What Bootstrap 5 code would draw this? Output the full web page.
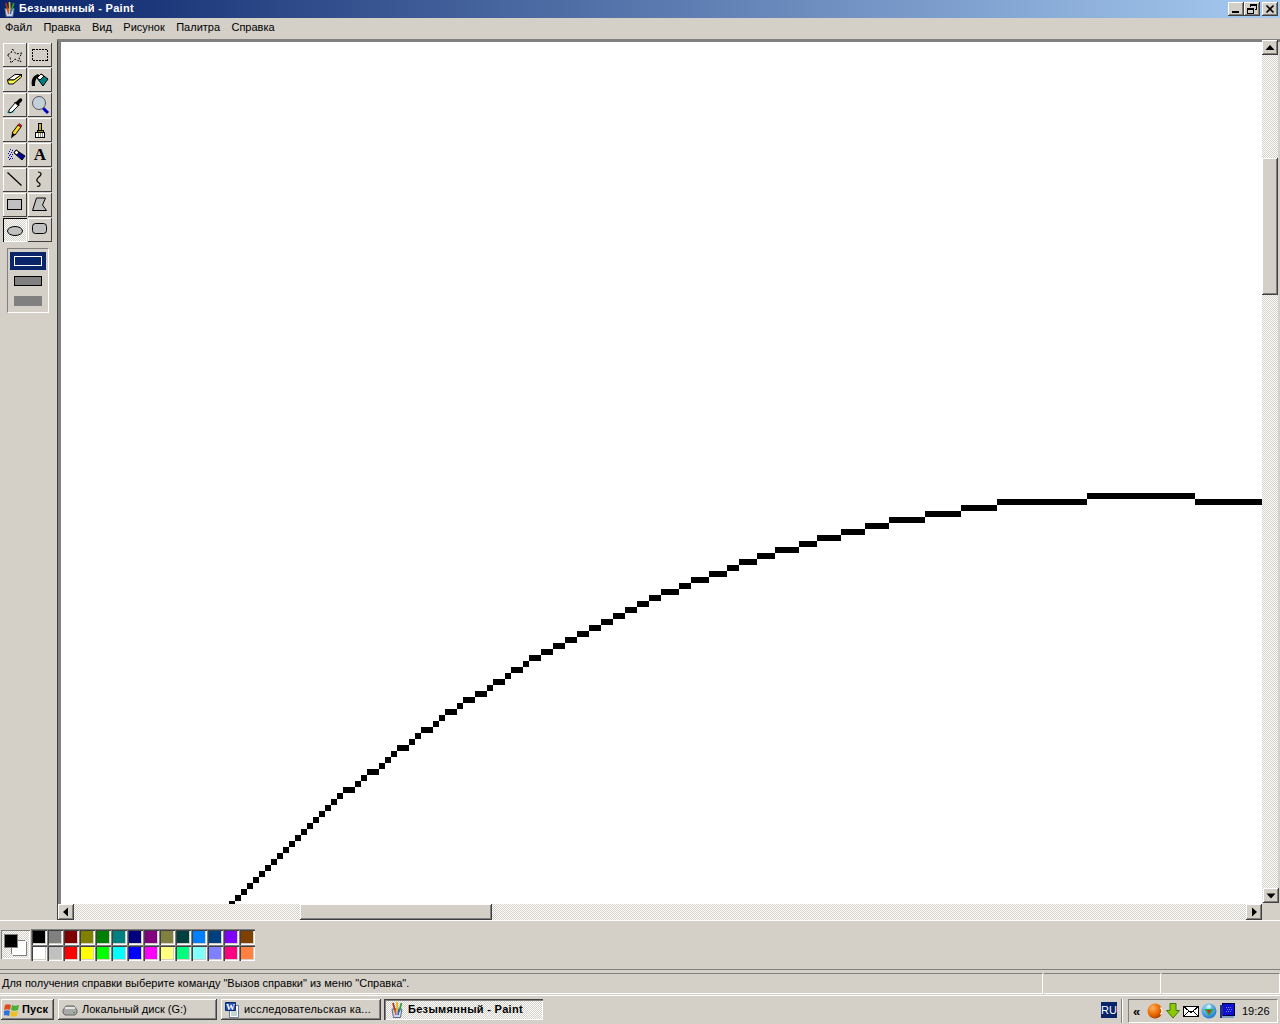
<!DOCTYPE html>
<html lang="ru">
<head>
    <meta charset="UTF-8">
    <title>Безымянный - Paint</title>
    <link href="https://cdn.jsdelivr.net/npm/bootstrap@5.3.3/dist/css/bootstrap.min.css" rel="stylesheet">
    <style>
        body { margin: 0; width: 1280px; height: 1024px; overflow: hidden; background: #d4d0c8; color: #000;
               font: 11px/13px "Liberation Sans", sans-serif; }
        svg { display: block; flex: none; }

        .raised { background: #d4d0c8; box-shadow: inset -1px -1px #404040, inset 1px 1px #fff, inset -2px -2px #808080, inset 2px 2px #d4d0c8; }
        .dither { background: repeating-conic-gradient(#fff 0 25%, #d4d0c8 0 50%) 0 0 / 2px 2px; }

        /* titlebar */
        .title-bar { height: 18px; padding: 2px 2px 0 3px; background: linear-gradient(90deg, #0a246a, #a6caf0); color: #fff; font-weight: 700; }
        .title-text { margin-left: 3px; letter-spacing: .3px; }
        .cap-btn { width: 16px; height: 14px; }
        .cap-gap { margin-left: 2px; }
        .menu-bar { height: 21px; padding: 3px 0 0 5px; gap: 11.4px; }

        /* work area */
        .work-row { height: 881px; }
        .tool-side { width: 57px; padding: 4px 0 0 3px; }
        .tool-grid { display: grid; grid-template-columns: 24px 24px; grid-auto-rows: 24px; gap: 1px; }
        .tool-btn { background: #d4d0c8; box-shadow: inset -1px -1px #404040, inset 1px 1px #fff; }
        .tool-btn.on { background: repeating-conic-gradient(#fff 0 25%, #d4d0c8 0 50%) 0 0 / 2px 2px; box-shadow: inset 1px 1px #000, inset -1px -1px #fff; }
        .tool-letter { font: 700 17px/24px "Liberation Serif", serif; text-align: center; }
        .tool-opts { width: 42px; height: 65px; margin: 6px 0 0 4px; padding: 3px 2px; border: 1px solid #808080; border-right-color: #fff; border-bottom-color: #fff; }
        .opt-item { height: 18px; padding: 4px; margin-bottom: 2px; }
        .opt-item.on { background: #0a246a; }
        .opt-shape { height: 10px; background: #808080; }
        .opt-item.on .opt-shape { background: #0a246a; border: 1px solid #fff; }
        .opt-shape.lined { border: 1px solid #000; }

        .work-space { width: 1223px; height: 881px; border-top: 3px solid #808080; border-left: 1px solid #404040; }
        .work-inner { border-left: 3px solid #808080; }
        .canvas-box { width: 1201px; height: 862px; background: #fff; overflow: hidden; }
        .v-scroll { width: 16px; height: 863px; margin-top: -2px; }
        .h-scroll { height: 16px; margin-right: 18px; }
        .sc-btn { width: 16px; height: 16px; }
        .sc-down { margin-left: 1px; height: 15px; }
        .sc-up { height: 15px; }
        .v-thumb { width: 16px; height: 137px; margin-top: 103px; }
        .h-thumb { width: 192px; height: 16px; margin-left: 226px; }
        .line-top { height: 1px; background: #fff; }

        /* palette */
        .palette-row { height: 48px; padding: 8px 0 0 1px; }
        .cur-colors { width: 29px; height: 29px; margin: 1px 1px 0 0; box-shadow: inset 1px 1px #808080, inset -1px -1px #fff; }
        .cur-back { left: 11px; top: 11px; width: 14px; height: 14px; background: #fff; box-shadow: inset 1px 1px #fff, 1px 1px #808080, -1px -1px #808080; }
        .cur-front { left: 4px; top: 5px; width: 12px; height: 12px; background: #000; box-shadow: 0 0 0 1px #808080; }
        .pal-grid { display: grid; grid-template-columns: repeat(14, 16px); grid-auto-rows: 16px; }
        .pal-cell { box-shadow: inset 1px 1px #808080, inset 2px 2px #404040, inset -1px -1px #fff, inset -2px -2px #d4d0c8; }

        /* status */
        .status-wrap { height: 26px; border-top: 1px solid #808080; padding-top: 3px; }
        .status-cell { height: 21px; padding: 3px 0 0 2px; border-top: 1px solid #808080; border-bottom: 1px solid #fff; border-right: 1px solid #fff; }
        .status-main { width: 1043px; }
        .status-gap { margin-left: 1px; }
        .status-mid { width: 117px; }

        /* taskbar */
        .task-bar { height: 29px; padding-top: 3px; border-top: 1px solid #fff; }
        .start-btn { width: 53px; height: 21px; margin-left: 1px; padding-left: 3px; font-weight: 700; gap: 3px; letter-spacing: .2px; }
        .task-btn { height: 21px; padding-left: 4px; gap: 4px; white-space: nowrap; overflow: hidden; }
        .task-disk { width: 159px; margin-left: 4px; }
        .task-word { width: 160px; margin-left: 4px; letter-spacing: .2px; gap: 3px; }
        .task-paint { width: 159px; margin-left: 3px; padding-left: 6px; font-weight: 700; letter-spacing: .3px; background: repeating-conic-gradient(#fff 0 25%, #d4d0c8 0 50%) 0 0 / 2px 2px; box-shadow: inset 1px 1px #404040, inset 2px 2px #808080, inset -1px -1px #fff; }
        .lang-box { width: 16px; height: 16px; margin: 3px 0 0 558px; background: #0a246a; color: #fff; text-align: center; line-height: 16px; }
        .tray-sep { width: 2px; height: 24px; margin: 0 0 0 4px; border-left: 1px solid #808080; border-right: 1px solid #fff; }
        .tray-box { width: 150px; height: 24px; margin-left: 5px; padding-left: 4px; gap: 2px; border: 1px solid #808080; border-right-color: #fff; border-bottom-color: #fff; }
        .tray-more { width: 12px; font-weight: 700; font-size: 13px; }
        .tray-time { margin-left: 5px; }
    </style>
</head>
<body class="d-flex flex-column">
    <svg width="0" height="0" class="position-absolute">
        <defs>
            <symbol id="paintIcon" viewBox="0 0 14 16">
                <path d="M2 7h10l-1.500 8.500H3.500z" fill="#c9d6ee" stroke="#5a6b8c"/>
                <path d="M3 1l2.500 9" stroke="#b5301c" stroke-width="1.800" fill="none"/>
                <path d="M7 0l.5 10" stroke="#e8b818" stroke-width="1.800" fill="none"/>
                <path d="M11.500 1L9 10" stroke="#2f9e3c" stroke-width="1.800" fill="none"/>
                <path d="M5 7l1 6" stroke="#e0561c" stroke-width="1.500"/>
                <path d="M9 7l-1 6" stroke="#2c66c4" stroke-width="1.500"/>
            </symbol>
            <radialGradient id="ballFill" cx="35%" cy="30%" r="75%">
                <stop offset="0" stop-color="#ffb060"/><stop offset=".6" stop-color="#e86a00"/><stop offset="1" stop-color="#a83c00"/>
            </radialGradient>
            <radialGradient id="globeFill" cx="40%" cy="30%" r="75%">
                <stop offset="0" stop-color="#a0e0ff"/><stop offset="1" stop-color="#1c70c8"/>
            </radialGradient>
        </defs>
    </svg>

    <!-- Заголовок окна -->
    <div class="title-bar d-flex align-items-start">
        <svg width="13" height="15"><use href="#paintIcon"/></svg>
        <span class="title-text flex-grow-1">Безымянный - Paint</span>
        <div class="cap-btn raised d-flex align-items-center justify-content-center">
            <svg width="16" height="14" shape-rendering="crispEdges"><path d="M4 9h7v2H4z" fill="#000"/></svg>
        </div>
        <div class="cap-btn raised">
            <svg width="16" height="14" shape-rendering="crispEdges" fill="none" stroke="#000"><path d="M6.500 4.500v-2h6v5h-2M6 3.500h6"/><path d="M3.500 6.500h6v5h-6zM3 7.500h6"/></svg>
        </div>
        <div class="cap-btn cap-gap raised">
            <svg width="16" height="14"><path d="M4.500 3.500l7 7M11.500 3.500l-7 7" stroke="#000" stroke-width="1.700"/></svg>
        </div>
    </div>

    <!-- Menu -->
    <div class="menu-bar d-flex">
        <span>Файл</span><span>Правка</span><span>Вид</span><span>Рисунок</span><span>Палитра</span><span>Справка</span>
    </div>

    <div class="work-row d-flex">
        <!-- Narzędzia -->
        <div class="tool-side">
            <div class="tool-grid">
                <div class="tool-btn"><svg width="24" height="24" fill="none" stroke="#000" stroke-dasharray="2 1.500"><path d="M9.500 6L13 11l6-1-3 5 2 4-6-3-4 4-1-6-3-2 4-2z"/></svg></div>
                <div class="tool-btn"><svg width="24" height="24" fill="none" stroke="#000" stroke-dasharray="2 1" shape-rendering="crispEdges"><path d="M4.500 6.500h15v11h-15z"/></svg></div>
                <div class="tool-btn"><svg width="24" height="24" stroke="#000"><path d="M4.500 12L12 6.500h6.500L11 12z" fill="#fff"/><path d="M4.500 12H11l7.500-5.500V9L10 16H5.500z" fill="#ffff40"/></svg></div>
                <div class="tool-btn"><svg width="24" height="24"><path d="M4 18c-1-5 0-10 6-12l2 2c-3 1-5 3-5 10z" fill="#000"/><path d="M9 10l4-4 7 5-5 7z" fill="#008080" stroke="#000"/><path d="M9 10l4-4 3 2-4 4z" fill="#fff" stroke="#000"/></svg></div>
                <div class="tool-btn"><svg width="24" height="24"><path d="M4 19c2-2 6-2 8-2l-2 3H4z" fill="#00c8c8"/><path d="M6 17l7-8 3 3-7 7-3 1z" fill="#fff" stroke="#000"/><path d="M13 9l3-3c2-2 4 0 3 2l-3 3 1 1-2 1-4-4z" fill="#000"/></svg></div>
                <div class="tool-btn"><svg width="24" height="24"><path d="M15 15l5 5" stroke="#0000c0" stroke-width="3"/><circle cx="11" cy="10" r="6.500" fill="#c4d0d8" stroke="#556"/></svg></div>
                <div class="tool-btn"><svg width="24" height="24"><path d="M9 15l6-8 3 2-6 8z" fill="#ffd820" stroke="#000"/><path d="M8 20.500l1-5.500 3 2z" fill="#000"/><path d="M15 7l1-1.500 3 2-1 1.500z" fill="#d01010" stroke="#702020" stroke-width=".7"/></svg></div>
                <div class="tool-btn"><svg width="24" height="24" shape-rendering="crispEdges"><path d="M10.500 5.500h3v7h-3z" fill="#c8b820" stroke="#000"/><path d="M9 12.500h6v2H9z" fill="#a09020" stroke="#000"/><path d="M7.500 14.500h9v5h-9z" fill="#fff" stroke="#000"/><path d="M10 15v4M12 15v4M14 15v4" stroke="#888"/></svg></div>
                <div class="tool-btn"><svg width="24" height="24"><path d="M7 6h1v1H7zM9 7h1v1H9zM6 8h1v1H6zM8 9h1v1H8zM5 10h1v1H5zM7 11h1v1H7zM9 11h1v1H9zM6 12h1v1H6zM8 13h1v1H8zM5 14h1v1H5zM7 15h1v1H7zM9 15h1v1H9zM6 16h1v1H6z" fill="#0000c0"/><path d="M11 10l2-3 9 6-3 4z" fill="#0000a0" stroke="#000"/><path d="M11 10l2-3 3 2-2 3z" fill="#fff" stroke="#000"/></svg></div>
                <div class="tool-btn tool-letter">A</div>
                <div class="tool-btn"><svg width="24" height="24"><path d="M4.500 4.500l14 13" stroke="#000" stroke-width="1.200"/></svg></div>
                <div class="tool-btn"><svg width="24" height="24" fill="none" stroke="#000" stroke-width="1.200"><path d="M10 4c3 0 4 2 2 4s-4 3-3 5 4 2 3 4-2 1.500-3 1"/></svg></div>
                <div class="tool-btn"><svg width="24" height="24" shape-rendering="crispEdges"><path d="M4.500 6.500h14v10h-14z" fill="#c0c0c0" stroke="#000"/></svg></div>
                <div class="tool-btn"><svg width="24" height="24"><path d="M4.500 17.500l4-12.500h9l-3 7 4 5.500z" fill="#c0c0c0" stroke="#000"/></svg></div>
                <div class="tool-btn on"><svg width="24" height="24"><ellipse cx="12" cy="13" rx="7.500" ry="4.500" fill="#c0c0c0" stroke="#000"/></svg></div>
                <div class="tool-btn"><svg width="24" height="24"><rect x="4.500" y="5.500" width="14" height="10" rx="3" fill="#c0c0c0" stroke="#000"/></svg></div>
            </div>
            <div class="tool-opts">
                <div class="opt-item on"><div class="opt-shape"></div></div>
                <div class="opt-item"><div class="opt-shape lined"></div></div>
                <div class="opt-item"><div class="opt-shape"></div></div>
            </div>
        </div>

        <!-- Obszar rysowania -->
        <div class="work-space">
            <div class="work-inner">
                <div class="d-flex">
                    <div class="canvas-box">
                        <svg id="curve" width="1201" height="862" viewBox="61 42 1201 862" shape-rendering="crispEdges"></svg>
                    </div>
                    <div class="v-scroll dither d-flex flex-column">
                        <div class="sc-btn sc-up raised"><svg width="16" height="15"><path d="M8 5l-4.500 5h9z" fill="#000"/></svg></div>
                        <div class="v-thumb raised"></div>
                        <div class="sc-btn sc-down raised mt-auto"><svg width="16" height="15"><path d="M8 10.500l-4.500-5h9z" fill="#000"/></svg></div>
                    </div>
                </div>
            </div>
            <div class="h-scroll dither d-flex">
                <div class="sc-btn raised"><svg width="16" height="16"><path d="M5 8l5-4.500v9z" fill="#000"/></svg></div>
                <div class="h-thumb raised"></div>
                <div class="sc-btn raised ms-auto"><svg width="16" height="16"><path d="M11 8L6 3.500v9z" fill="#000"/></svg></div>
            </div>
        </div>
    </div>
    <div class="line-top"></div>

    <!-- Paleta -->
    <div class="palette-row d-flex align-items-start">
        <div class="cur-colors dither position-relative">
            <div class="cur-back position-absolute"></div>
            <div class="cur-front position-absolute"></div>
        </div>
        <div class="pal-grid" id="palette"></div>
    </div>

    <!-- Status -->
    <div class="status-wrap d-flex">
        <div class="status-cell status-main">Для получения справки выберите команду "Вызов справки" из меню "Справка".</div>
        <div class="status-cell status-mid status-gap"></div>
        <div class="status-cell status-gap flex-grow-1"></div>
    </div>

    <!-- Pasek zadań -->
    <div class="task-bar d-flex align-items-start">
        <div class="start-btn raised d-flex align-items-center">
            <svg width="15" height="14" viewBox="0 0 15 14"><path d="M1 2c2-1 3-1 6 0L6 7C4 6 2 6 0 7z" fill="#e04a1c"/><path d="M8 2c2 1 4 1 7 0l-1 5c-3 1-5 1-7 0z" fill="#48b030"/><path d="M0 8c2-1 4-1 6 0l-1 5c-2-1-4-1-6 0z" fill="#3070d8"/><path d="M7 8c2 1 4 1 7 0l-1 5c-3 1-5 1-7 0z" fill="#f0c020"/></svg>
            <span>Пуск</span>
        </div>
        <div class="task-btn task-disk raised d-flex align-items-center">
            <svg width="16" height="12" viewBox="0 0 16 12"><path d="M1 6l3-4h8l3 4v3l-2 2H3L1 9z" fill="#a8a8a8" stroke="#666"/><path d="M3 4h10" stroke="#e8e8e8" stroke-width="2"/><path d="M11 8.500h2" stroke="#3a3"/></svg>
            <span>Локальный диск (G:)</span>
        </div>
        <div class="task-btn task-word raised d-flex align-items-center">
            <svg width="16" height="16" viewBox="0 0 16 16"><path d="M4.500 3.500h9v12h-9z" fill="#fff" stroke="#6a7ba8"/><path d="M6 9h6M6 11h6M6 13h6" stroke="#8aa"/><path d="M.5 .5h10v8H.5z" fill="#2050b0" stroke="#102868"/><text x="5.500" y="7.500" text-anchor="middle" fill="#fff" font-family="Liberation Serif" font-weight="700" font-size="9">W</text></svg>
            <span>исследовательская ка...</span>
        </div>
        <div class="task-btn task-paint d-flex align-items-center">
            <svg width="14" height="16"><use href="#paintIcon"/></svg>
            <span>Безымянный - Paint</span>
        </div>
        <div class="lang-box">RU</div>
        <div class="tray-sep"></div>
        <div class="tray-box d-flex align-items-center">
            <span class="tray-more">«</span>
            <svg width="16" height="16"><circle cx="8" cy="8" r="7.500" fill="url(#ballFill)"/><path d="M13.500 4.500a5 5 0 0 1 0 7" fill="none" stroke="#fff" stroke-width="1.500"/></svg>
            <svg width="16" height="16"><path d="M5 .5h6v7h3.500L8 15 1.500 7.500H5z" fill="#90c800" stroke="#3a7a10"/></svg>
            <svg width="16" height="16" shape-rendering="crispEdges"><path d="M.5 3.500h15v10H.5z" fill="#fff" stroke="#000"/><path d="M.5 3.500L8 9.500l7.500-6M.5 13.500L6 8M15.500 13.500L10 8" fill="none" stroke="#000"/></svg>
            <svg width="16" height="16"><circle cx="8" cy="8" r="7.500" fill="url(#globeFill)"/><path d="M3 6h10L8 13z" fill="#20b040"/><path d="M6 7h4L8 11z" fill="#e02020"/><circle cx="8" cy="3.500" r="2" fill="#d0f0ff"/></svg>
            <svg width="16" height="16" shape-rendering="crispEdges"><path d="M3.500 .5h12v12h-12z" fill="#1010d0" stroke="#000040"/><path d="M1 2h3v13H1z" fill="#203080"/><path d="M3 13h12v2H3z" fill="#80a0c0"/><path d="M7 4h1v1H7zM9 4h1v1H9zM11 4h1v1h-1zM8 6h1v1H8zM10 6h1v1h-1zM12 6h1v1h-1zM7 8h1v1H7zM9 8h1v1H9zM11 8h1v1h-1z" fill="#7080ff"/></svg>
            <span class="tray-time">19:26</span>
        </div>
    </div>

    <script>
        // Kreska krzywej: [x od, x do, y], grubość 6 px (powiększenie w Paincie)
        const segs = [[343,355,787],[355,361,781],[361,367,775],[367,379,769],[379,385,763],[385,391,757],[391,397,751],
            [397,409,745],[409,415,739],[415,421,733],[421,433,727],[433,439,721],[439,445,715],[445,457,709],[457,463,703],
            [463,475,697],[475,487,691],[487,493,685],[493,505,679],[505,511,673],[511,523,667],[523,529,661],[529,541,655],
            [541,553,649],[553,565,643],[565,577,637],[577,589,631],[589,601,625],[601,613,619],[613,625,613],[625,637,607],
            [637,649,601],[649,661,595],[661,679,589],[679,691,583],[691,709,577],[709,727,571],[727,739,565],[739,757,559],
            [757,775,553],[775,799,547],[799,817,541],[817,841,535],[841,865,529],[865,889,523],[889,925,517],[925,961,511],
            [961,997,505],[997,1087,499],[1087,1195,493],[1195,1262,499]];
        // Dolna część idzie równo po przekątnej
        for (let i = 0; i <= 18; i++) {
            segs.push([229 + i * 6, 235 + i * 6, 901 - i * 6]);
        }
        let d = "";
        segs.forEach(s => { d += "M" + s[0] + " " + s[2] + "H" + s[1] + "v6H" + s[0] + "z"; });
        const path = document.createElementNS("http://www.w3.org/2000/svg", "path");
        path.setAttribute("d", d);
        document.getElementById("curve").appendChild(path);

        const colors = ["#000000","#808080","#800000","#808000","#008000","#008080","#000080","#800080","#808040","#004040","#0080ff","#004080","#8000ff","#804000",
            "#ffffff","#c0c0c0","#ff0000","#ffff00","#00ff00","#00ffff","#0000ff","#ff00ff","#ffff80","#00ff80","#80ffff","#8080ff","#ff0080","#ff8040"];
        const palette = document.getElementById("palette");
        colors.forEach(c => {
            const cell = document.createElement("div");
            cell.className = "pal-cell";
            cell.style.backgroundColor = c;
            palette.appendChild(cell);
        });
    </script>
    <script src="https://cdn.jsdelivr.net/npm/bootstrap@5.3.3/dist/js/bootstrap.bundle.min.js"></script>
</body>
</html>
